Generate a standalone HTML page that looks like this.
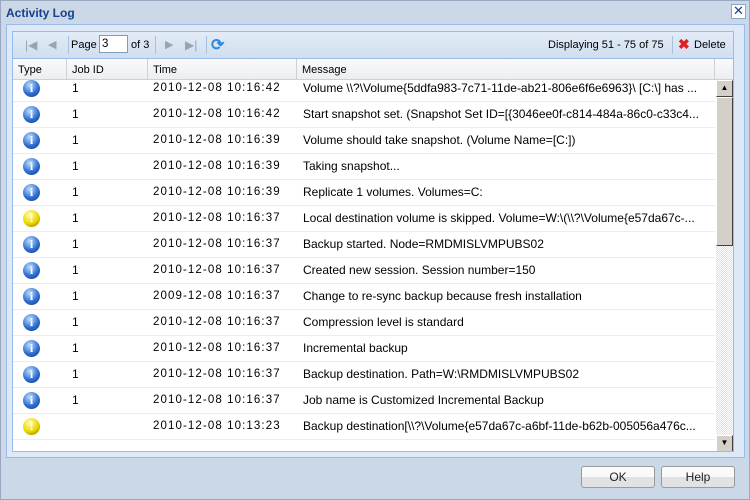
<!DOCTYPE html><html><head><style>
*{box-sizing:border-box;margin:0;padding:0}
body{width:750px;height:500px;overflow:hidden;background:#cbd8e7;font-family:"Liberation Sans",Arial,sans-serif;font-size:11px;color:#000;position:relative}
.abs{position:absolute}
.win{left:0;top:0;width:750px;height:500px;border:1px solid #99a8c0}
.title{left:6px;top:6px;font-weight:bold;color:#15428b;font-size:12px}
.close{left:731px;top:4px;width:15px;height:15px;border:1px solid #8aa6c8;background:#fff;color:#15428b;font-size:13px;line-height:12px;text-align:center}
.panel{left:6px;top:24px;width:739px;height:434px;background:#dfe8f6;border:1px solid #99bbe8}
.grid{left:12px;top:31px;width:722px;height:421px;border:1px solid #99bbe8;background:#fff;overflow:hidden}
.tb{left:0;top:0;width:720px;height:27px;background:linear-gradient(#e3ecf8,#d0def0);border-bottom:1px solid #99bbe8}
.hd{left:0;top:27px;width:720px;height:21px;background:linear-gradient(#fafafa,#eceef2);border-bottom:1px solid #d0d0d0}
.hd div{position:absolute;top:0;height:21px;line-height:22px;padding-left:5px;border-right:1px solid #d0d0d0}
.row{position:absolute;left:0;width:702px;height:26px;border-bottom:1px solid #ededed;font-size:12px}
.row span{position:absolute;top:5px;white-space:nowrap;line-height:14px}
.row span.t{letter-spacing:1.1px;font-size:11.5px;top:5px}
.ic{position:absolute;left:10px;top:4px;width:17px;height:17px;border-radius:50%;color:#fff;font:bold 12px "Liberation Serif",serif;text-align:center;line-height:17px}
.i{background:radial-gradient(circle at 40% 30%,#bfe0ff,#2f6fd0 55%,#16337a)}
.w{background:radial-gradient(circle at 40% 30%,#ffffb0,#e8d800 55%,#7a6200);font-family:"Liberation Sans",sans-serif}
.btn{top:466px;width:74px;height:22px;border:1px solid #9a9a9a;border-radius:3px;background:linear-gradient(#fafafa 50%,#e2e2e2 50%);text-align:center;line-height:20px;color:#222;font-size:12px}
.sb{left:703px;top:48px;width:17px;height:372px;background:repeating-conic-gradient(#e0e0e0 0 25%,#fff 0 50%) 0 0/2px 2px}
.sbb{position:absolute;left:0;width:17px;height:17px;background:#d4d0c8;border:1px solid;border-color:#fff #404040 #404040 #fff}
</style></head><body>
<div class="abs win"></div>
<div class="abs title">Activity Log</div>
<div class="abs close">✕</div>
<div class="abs panel"></div>
<div class="abs grid">
 <div class="abs tb">
  <span class="abs" style="left:12px;top:6px;color:#9aa4b0;font-size:12px">|◀</span>
  <span class="abs" style="left:35px;top:6px;color:#9aa4b0;font-size:11px">◀</span>
  <span class="abs" style="left:55px;top:4px;width:1px;height:18px;background:#a9c0df"></span>
  <span class="abs" style="left:58px;top:7px">Page</span>
  <span class="abs" style="left:86px;top:3px;width:29px;height:18px;border:1px solid #7f9db9;background:#fff;padding-left:2px;line-height:16px;font-size:11.5px">3</span>
  <span class="abs" style="left:118px;top:7px">of 3</span>
  <span class="abs" style="left:142px;top:4px;width:1px;height:18px;background:#a9c0df"></span>
  <span class="abs" style="left:152px;top:6px;color:#9aa4b0">▶</span>
  <span class="abs" style="left:172px;top:6px;color:#9aa4b0;font-size:12px">▶|</span>
  <span class="abs" style="left:193px;top:4px;width:1px;height:18px;background:#a9c0df"></span>
  <span class="abs" style="left:198px;top:3px;color:#2a8ae0;font-size:16px;font-weight:bold">⟳</span>
  <span class="abs" style="left:535px;top:7px">Displaying 51 - 75 of 75</span>
  <span class="abs" style="left:659px;top:4px;width:1px;height:18px;background:#a9c0df"></span>
  <span class="abs" style="left:665px;top:4px;color:#e02020;font-size:14px;font-weight:bold">✖</span>
  <span class="abs" style="left:681px;top:7px">Delete</span>
 </div>
 <div class="abs hd">
  <div style="left:0;width:54px">Type</div><div style="left:54px;width:81px">Job ID</div><div style="left:135px;width:149px">Time</div><div style="left:284px;width:418px">Message</div>
 </div>
 <div class="abs" style="left:0;top:48px;width:702px;height:372px;overflow:hidden">
  <div style="position:absolute;left:0;top:-4px;width:702px">
   <div class="row" style="top:0"><div class="ic i">i</div><span style="left:59px">1</span><span class="t" style="left:140px">2010-12-08 10:16:42</span><span style="left:290px">Volume \\?\Volume{5ddfa983-7c71-11de-ab21-806e6f6e6963}\ [C:\] has ...</span></div>
   <div class="row" style="top:26px"><div class="ic i">i</div><span style="left:59px">1</span><span class="t" style="left:140px">2010-12-08 10:16:42</span><span style="left:290px">Start snapshot set. (Snapshot Set ID=[{3046ee0f-c814-484a-86c0-c33c4...</span></div>
   <div class="row" style="top:52px"><div class="ic i">i</div><span style="left:59px">1</span><span class="t" style="left:140px">2010-12-08 10:16:39</span><span style="left:290px">Volume should take snapshot. (Volume Name=[C:])</span></div>
   <div class="row" style="top:78px"><div class="ic i">i</div><span style="left:59px">1</span><span class="t" style="left:140px">2010-12-08 10:16:39</span><span style="left:290px">Taking snapshot...</span></div>
   <div class="row" style="top:104px"><div class="ic i">i</div><span style="left:59px">1</span><span class="t" style="left:140px">2010-12-08 10:16:39</span><span style="left:290px">Replicate 1 volumes. Volumes=C:</span></div>
   <div class="row" style="top:130px"><div class="ic w">!</div><span style="left:59px">1</span><span class="t" style="left:140px">2010-12-08 10:16:37</span><span style="left:290px">Local destination volume is skipped. Volume=W:\(\\?\Volume{e57da67c-...</span></div>
   <div class="row" style="top:156px"><div class="ic i">i</div><span style="left:59px">1</span><span class="t" style="left:140px">2010-12-08 10:16:37</span><span style="left:290px">Backup started. Node=RMDMISLVMPUBS02</span></div>
   <div class="row" style="top:182px"><div class="ic i">i</div><span style="left:59px">1</span><span class="t" style="left:140px">2010-12-08 10:16:37</span><span style="left:290px">Created new session. Session number=150</span></div>
   <div class="row" style="top:208px"><div class="ic i">i</div><span style="left:59px">1</span><span class="t" style="left:140px">2009-12-08 10:16:37</span><span style="left:290px">Change to re-sync backup because fresh installation</span></div>
   <div class="row" style="top:234px"><div class="ic i">i</div><span style="left:59px">1</span><span class="t" style="left:140px">2010-12-08 10:16:37</span><span style="left:290px">Compression level is standard</span></div>
   <div class="row" style="top:260px"><div class="ic i">i</div><span style="left:59px">1</span><span class="t" style="left:140px">2010-12-08 10:16:37</span><span style="left:290px">Incremental backup</span></div>
   <div class="row" style="top:286px"><div class="ic i">i</div><span style="left:59px">1</span><span class="t" style="left:140px">2010-12-08 10:16:37</span><span style="left:290px">Backup destination. Path=W:\RMDMISLVMPUBS02</span></div>
   <div class="row" style="top:312px"><div class="ic i">i</div><span style="left:59px">1</span><span class="t" style="left:140px">2010-12-08 10:16:37</span><span style="left:290px">Job name is Customized Incremental Backup</span></div>
   <div class="row" style="top:338px"><div class="ic w">!</div><span class="t" style="left:140px">2010-12-08 10:13:23</span><span style="left:290px">Backup destination[\\?\Volume{e57da67c-a6bf-11de-b62b-005056a476c...</span></div>
  </div>
 </div>
 <div class="abs sb">
  <div class="sbb" style="top:0;font-size:8px;text-align:center;line-height:14px">▲</div>
  <div class="sbb" style="top:17px;height:149px"></div>
  <div class="sbb" style="top:355px;font-size:8px;text-align:center;line-height:14px">▼</div>
 </div>
</div>
<div class="abs btn" style="left:581px">OK</div>
<div class="abs btn" style="left:661px">Help</div>
</body></html>
